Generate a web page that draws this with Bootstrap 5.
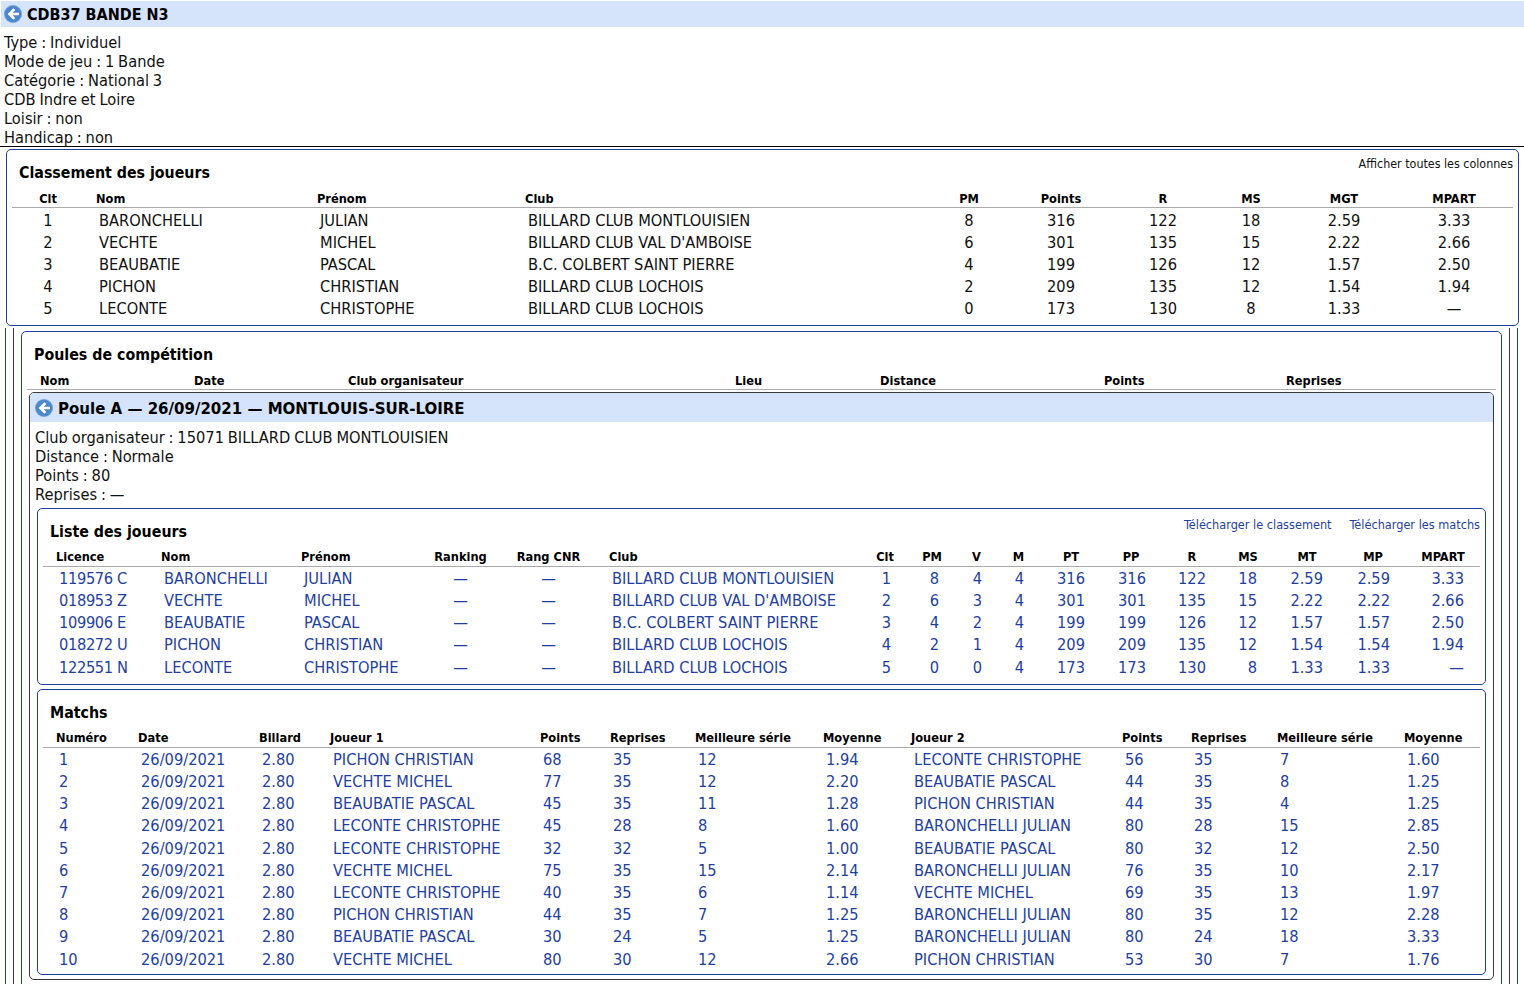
<!DOCTYPE html>
<html lang="fr"><head><meta charset="utf-8"><title>CDB37 BANDE N3</title>
<link href="https://cdn.jsdelivr.net/npm/bootstrap@5.3.0/dist/css/bootstrap.min.css" rel="stylesheet">
<style>
:root{--blu:#1f3f9f;--drk:#3a3a3a;--sky:#d6e4fb}
html,body{overflow:hidden;height:984px}
body{font-family:"DejaVu Sans Condensed","DejaVu Sans",sans-serif;font-stretch:condensed;font-size:16.3px;line-height:19px;color:#111;background:#fff;padding-top:1px}
a,a:hover{color:var(--blu);text-decoration:none}
.bar{background:var(--sky);height:26px;margin-left:1px;font-weight:700;font-size:16px;color:#000;padding-left:3px;gap:5px}
.bar svg,.pbar svg{flex:none;width:18px;height:18px}
.infos{padding:6px 0 0 4px;height:120px;border-bottom:1px solid #000;margin-bottom:2px;word-spacing:-.8px}
.pan{border:1px solid var(--blu);border-radius:5px;background:#fff}
.pan-top{margin:0 5px 0 6px;height:177px;padding:0 5px}
.head{height:39px}
.ttl{font-weight:700;font-size:15.8px;line-height:20px;margin:13px 0 0 7px;color:#000}
.acts{font-size:12.4px;line-height:16px;padding-top:6px}
.acts-dl{font-size:12.6px;padding-top:8px;gap:18px}
.w-blu{margin:2px 6px 0 5px;border:solid var(--blu);border-width:0 1px;padding:0 7px;height:670px}
.w-drk{border:solid var(--drk);border-width:0 1px;padding:3px 7px 0;height:100%}
.pan-pou{height:700px;padding:0 5px}
.pan-drk{border:1px solid var(--drk);border-radius:5px;margin:2px 2px 0;height:588px}
.pbar{background:var(--sky);height:29px;border-radius:4px 4px 0 0;font-weight:700;font-size:16.7px;color:#000;padding:1px 0 0 5px;gap:5px}
.pinfo{padding:6px 0 0 5px;height:86px;word-spacing:-.8px}
.pan-in{margin:0 7px;padding:0 5px}
.pan-lis{height:177px;margin-bottom:4px}
.pan-mat{height:286px}
.tb{table-layout:fixed;width:auto;margin:0;border-collapse:separate;border-spacing:0;--bs-table-bg:transparent;color:inherit}
.tb>:not(caption)>*>*{padding:0;border:0;box-shadow:none;background:transparent;color:inherit}
.tb>thead>tr>th{font-size:12.7px;line-height:18px;height:19px;border-bottom:1px solid #aaa;font-weight:700;color:#000;white-space:nowrap;vertical-align:middle}
.tb>tbody>tr>td{line-height:22px;height:22px;white-space:nowrap;vertical-align:middle}
.tb>tbody>tr:first-child>td{padding-top:1px;height:23px}
.tla{width:1501px}
.tla>thead>tr>th{line-height:17px;padding-top:1px}
.tla>tbody>tr:first-child>td{padding-top:2px;height:24px}
.tla>thead>tr>th:nth-child(2),.tla>thead>tr>th:nth-child(3),.tla>thead>tr>th:nth-child(4){padding-left:12px}
.tla>tbody>tr>td:nth-child(2),.tla>tbody>tr>td:nth-child(3),.tla>tbody>tr>td:nth-child(4){padding-left:15px}
.tla col:nth-child(1){width:72px}.tla col:nth-child(2){width:221px}.tla col:nth-child(3){width:208px}.tla col:nth-child(4){width:420px}
.tla col:nth-child(5){width:72px}.tla col:nth-child(6){width:112px}.tla col:nth-child(7){width:92px}.tla col:nth-child(8){width:84px}.tla col:nth-child(9){width:102px}.tla col:nth-child(10){width:118px}
.tpo{width:1469px}
.tpo>thead>tr>th{padding-left:13px;padding-top:1px;line-height:17px}
.tpo col:nth-child(1){width:154px}.tpo col:nth-child(2){width:154px}.tpo col:nth-child(3){width:387px}.tpo col:nth-child(4){width:145px}.tpo col:nth-child(5){width:224px}.tpo col:nth-child(6){width:182px}.tpo col:nth-child(7){width:223px}
.tli{width:1437px}
.tli>tbody>tr>td,.tma>tbody>tr>td{height:22.2px}
.tli>tbody>tr>td{text-align:right;padding-right:16px}
.tli>tbody>tr>td:nth-child(7),.tli>tbody>tr>td:nth-child(11){padding-right:15px}
.tli>tbody>tr>td:nth-child(8){padding-right:19px}
.tli>tbody>tr>td:nth-child(9){padding-right:13px}
.tli>tbody>tr>td:nth-child(10){padding-right:18px}
.tli>tbody>tr>td:nth-child(14),.tli>tbody>tr>td:nth-child(15){padding-right:17px}
.tli>thead>tr>th{text-align:center}
.tli>thead>tr>th.tl{text-align:left;padding-left:13px}
.tli>tbody>tr>td.tl{text-align:left;padding-left:16px;padding-right:0}
.tli>tbody>tr>td.tc{text-align:center;padding-right:0}
.tli>tbody>tr>td:first-child{letter-spacing:-.35px}
.tli col:nth-child(1){width:105px}.tli col:nth-child(2){width:140px}.tli col:nth-child(3){width:132px}.tli col:nth-child(4){width:81px}.tli col:nth-child(5){width:95px}.tli col:nth-child(6){width:268px}
.tli col:nth-child(7){width:42px}.tli col:nth-child(8){width:52px}.tli col:nth-child(9){width:37px}.tli col:nth-child(10){width:47px}.tli col:nth-child(11){width:58px}.tli col:nth-child(12){width:62px}.tli col:nth-child(13){width:60px}.tli col:nth-child(14){width:52px}.tli col:nth-child(15){width:66px}.tli col:nth-child(16){width:66px}.tli col:nth-child(17){width:74px}
.tma{width:1437px}
.tma>thead>tr>th{padding-left:13px}
.tma>tbody>tr>td{padding-left:16px}
.tma col:nth-child(1){width:82px}.tma col:nth-child(2){width:121px}.tma col:nth-child(3){width:71px}.tma col:nth-child(4){width:210px}.tma col:nth-child(5){width:70px}.tma col:nth-child(6){width:85px}.tma col:nth-child(7){width:128px}.tma col:nth-child(8){width:88px}.tma col:nth-child(9){width:211px}.tma col:nth-child(10){width:69px}.tma col:nth-child(11){width:86px}.tma col:nth-child(12){width:127px}.tma col:nth-child(13){width:89px}
.tli>tbody,.tma>tbody{color:var(--blu)}
</style></head><body>
<div class="bar d-flex align-items-center"><svg viewBox="0 0 18 18"><circle cx="9" cy="9" r="9" fill="#6f9fd6"/><circle cx="9" cy="9" r="8" fill="#4a87cb"/><path d="M9.4 3.2 3.6 9l5.8 5.8 1.9-1.9-2.6-2.6H15V7.7H8.7l2.6-2.6z" fill="#fff"/></svg><span>CDB37 BANDE N3</span></div>
<div class="infos">Type : Individuel<br>Mode de jeu : 1 Bande<br>Catégorie : National 3<br>CDB Indre et Loire<br>Loisir : non<br>Handicap : non</div>

<section class="pan pan-top">
<div class="head d-flex justify-content-between"><div class="ttl">Classement des joueurs</div><div class="acts">Afficher toutes les colonnes</div></div>
<table class="table tb tla"><colgroup><col><col><col><col><col><col><col><col><col><col></colgroup>
<thead><tr><th class="text-center">Clt</th><th>Nom</th><th>Prénom</th><th>Club</th><th class="text-center">PM</th><th class="text-center">Points</th><th class="text-center">R</th><th class="text-center">MS</th><th class="text-center">MGT</th><th class="text-center">MPART</th></tr></thead>
<tbody>
<tr><td class="text-center">1</td><td>BARONCHELLI</td><td>JULIAN</td><td>BILLARD CLUB MONTLOUISIEN</td><td class="text-center">8</td><td class="text-center">316</td><td class="text-center">122</td><td class="text-center">18</td><td class="text-center">2.59</td><td class="text-center">3.33</td></tr>
<tr><td class="text-center">2</td><td>VECHTE</td><td>MICHEL</td><td>BILLARD CLUB VAL D'AMBOISE</td><td class="text-center">6</td><td class="text-center">301</td><td class="text-center">135</td><td class="text-center">15</td><td class="text-center">2.22</td><td class="text-center">2.66</td></tr>
<tr><td class="text-center">3</td><td>BEAUBATIE</td><td>PASCAL</td><td>B.C. COLBERT SAINT PIERRE</td><td class="text-center">4</td><td class="text-center">199</td><td class="text-center">126</td><td class="text-center">12</td><td class="text-center">1.57</td><td class="text-center">2.50</td></tr>
<tr><td class="text-center">4</td><td>PICHON</td><td>CHRISTIAN</td><td>BILLARD CLUB LOCHOIS</td><td class="text-center">2</td><td class="text-center">209</td><td class="text-center">135</td><td class="text-center">12</td><td class="text-center">1.54</td><td class="text-center">1.94</td></tr>
<tr><td class="text-center">5</td><td>LECONTE</td><td>CHRISTOPHE</td><td>BILLARD CLUB LOCHOIS</td><td class="text-center">0</td><td class="text-center">173</td><td class="text-center">130</td><td class="text-center">8</td><td class="text-center">1.33</td><td class="text-center">—</td></tr>
</tbody></table>
</section>

<div class="w-blu"><div class="w-drk">
<section class="pan pan-pou">
<div class="head d-flex"><div class="ttl">Poules de compétition</div></div>
<table class="table tb tpo"><colgroup><col><col><col><col><col><col><col></colgroup>
<thead><tr><th>Nom</th><th>Date</th><th>Club organisateur</th><th>Lieu</th><th>Distance</th><th>Points</th><th>Reprises</th></tr></thead></table>
<div class="pan-drk">
<div class="pbar d-flex align-items-center"><svg viewBox="0 0 18 18"><circle cx="9" cy="9" r="9" fill="#6f9fd6"/><circle cx="9" cy="9" r="8" fill="#4a87cb"/><path d="M9.4 3.2 3.6 9l5.8 5.8 1.9-1.9-2.6-2.6H15V7.7H8.7l2.6-2.6z" fill="#fff"/></svg><span>Poule A — 26/09/2021 — MONTLOUIS-SUR-LOIRE</span></div>
<div class="pinfo">Club organisateur : 15071 BILLARD CLUB MONTLOUISIEN<br>Distance : Normale<br>Points : 80<br>Reprises : —</div>

<section class="pan pan-in pan-lis">
<div class="head d-flex justify-content-between"><div class="ttl">Liste des joueurs</div><div class="acts acts-dl d-flex"><a href="#">Télécharger le classement</a><a href="#">Télécharger les matchs</a></div></div>
<table class="table tb tli"><colgroup><col><col><col><col><col><col><col><col><col><col><col><col><col><col><col><col><col></colgroup>
<thead><tr><th class="tl">Licence</th><th class="tl">Nom</th><th class="tl">Prénom</th><th>Ranking</th><th>Rang CNR</th><th class="tl">Club</th><th>Clt</th><th>PM</th><th>V</th><th>M</th><th>PT</th><th>PP</th><th>R</th><th>MS</th><th>MT</th><th>MP</th><th>MPART</th></tr></thead>
<tbody>
<tr><td class="tl">119576 C</td><td class="tl">BARONCHELLI</td><td class="tl">JULIAN</td><td class="tc">—</td><td class="tc">—</td><td class="tl">BILLARD CLUB MONTLOUISIEN</td><td>1</td><td>8</td><td>4</td><td>4</td><td>316</td><td>316</td><td>122</td><td>18</td><td>2.59</td><td>2.59</td><td>3.33</td></tr>
<tr><td class="tl">018953 Z</td><td class="tl">VECHTE</td><td class="tl">MICHEL</td><td class="tc">—</td><td class="tc">—</td><td class="tl">BILLARD CLUB VAL D'AMBOISE</td><td>2</td><td>6</td><td>3</td><td>4</td><td>301</td><td>301</td><td>135</td><td>15</td><td>2.22</td><td>2.22</td><td>2.66</td></tr>
<tr><td class="tl">109906 E</td><td class="tl">BEAUBATIE</td><td class="tl">PASCAL</td><td class="tc">—</td><td class="tc">—</td><td class="tl">B.C. COLBERT SAINT PIERRE</td><td>3</td><td>4</td><td>2</td><td>4</td><td>199</td><td>199</td><td>126</td><td>12</td><td>1.57</td><td>1.57</td><td>2.50</td></tr>
<tr><td class="tl">018272 U</td><td class="tl">PICHON</td><td class="tl">CHRISTIAN</td><td class="tc">—</td><td class="tc">—</td><td class="tl">BILLARD CLUB LOCHOIS</td><td>4</td><td>2</td><td>1</td><td>4</td><td>209</td><td>209</td><td>135</td><td>12</td><td>1.54</td><td>1.54</td><td>1.94</td></tr>
<tr><td class="tl">122551 N</td><td class="tl">LECONTE</td><td class="tl">CHRISTOPHE</td><td class="tc">—</td><td class="tc">—</td><td class="tl">BILLARD CLUB LOCHOIS</td><td>5</td><td>0</td><td>0</td><td>4</td><td>173</td><td>173</td><td>130</td><td>8</td><td>1.33</td><td>1.33</td><td>—</td></tr>
</tbody></table>
</section>

<section class="pan pan-in pan-mat">
<div class="head d-flex"><div class="ttl">Matchs</div></div>
<table class="table tb tma"><colgroup><col><col><col><col><col><col><col><col><col><col><col><col><col></colgroup>
<thead><tr><th>Numéro</th><th>Date</th><th>Billard</th><th>Joueur 1</th><th>Points</th><th>Reprises</th><th>Meilleure série</th><th>Moyenne</th><th>Joueur 2</th><th>Points</th><th>Reprises</th><th>Meilleure série</th><th>Moyenne</th></tr></thead>
<tbody>
<tr><td>1</td><td>26/09/2021</td><td>2.80</td><td>PICHON CHRISTIAN</td><td>68</td><td>35</td><td>12</td><td>1.94</td><td>LECONTE CHRISTOPHE</td><td>56</td><td>35</td><td>7</td><td>1.60</td></tr>
<tr><td>2</td><td>26/09/2021</td><td>2.80</td><td>VECHTE MICHEL</td><td>77</td><td>35</td><td>12</td><td>2.20</td><td>BEAUBATIE PASCAL</td><td>44</td><td>35</td><td>8</td><td>1.25</td></tr>
<tr><td>3</td><td>26/09/2021</td><td>2.80</td><td>BEAUBATIE PASCAL</td><td>45</td><td>35</td><td>11</td><td>1.28</td><td>PICHON CHRISTIAN</td><td>44</td><td>35</td><td>4</td><td>1.25</td></tr>
<tr><td>4</td><td>26/09/2021</td><td>2.80</td><td>LECONTE CHRISTOPHE</td><td>45</td><td>28</td><td>8</td><td>1.60</td><td>BARONCHELLI JULIAN</td><td>80</td><td>28</td><td>15</td><td>2.85</td></tr>
<tr><td>5</td><td>26/09/2021</td><td>2.80</td><td>LECONTE CHRISTOPHE</td><td>32</td><td>32</td><td>5</td><td>1.00</td><td>BEAUBATIE PASCAL</td><td>80</td><td>32</td><td>12</td><td>2.50</td></tr>
<tr><td>6</td><td>26/09/2021</td><td>2.80</td><td>VECHTE MICHEL</td><td>75</td><td>35</td><td>15</td><td>2.14</td><td>BARONCHELLI JULIAN</td><td>76</td><td>35</td><td>10</td><td>2.17</td></tr>
<tr><td>7</td><td>26/09/2021</td><td>2.80</td><td>LECONTE CHRISTOPHE</td><td>40</td><td>35</td><td>6</td><td>1.14</td><td>VECHTE MICHEL</td><td>69</td><td>35</td><td>13</td><td>1.97</td></tr>
<tr><td>8</td><td>26/09/2021</td><td>2.80</td><td>PICHON CHRISTIAN</td><td>44</td><td>35</td><td>7</td><td>1.25</td><td>BARONCHELLI JULIAN</td><td>80</td><td>35</td><td>12</td><td>2.28</td></tr>
<tr><td>9</td><td>26/09/2021</td><td>2.80</td><td>BEAUBATIE PASCAL</td><td>30</td><td>24</td><td>5</td><td>1.25</td><td>BARONCHELLI JULIAN</td><td>80</td><td>24</td><td>18</td><td>3.33</td></tr>
<tr><td>10</td><td>26/09/2021</td><td>2.80</td><td>VECHTE MICHEL</td><td>80</td><td>30</td><td>12</td><td>2.66</td><td>PICHON CHRISTIAN</td><td>53</td><td>30</td><td>7</td><td>1.76</td></tr>
</tbody></table>
</section>
</div>
</section>
</div></div>
<script src="https://cdn.jsdelivr.net/npm/bootstrap@5.3.0/dist/js/bootstrap.bundle.min.js"></script>
</body></html>
